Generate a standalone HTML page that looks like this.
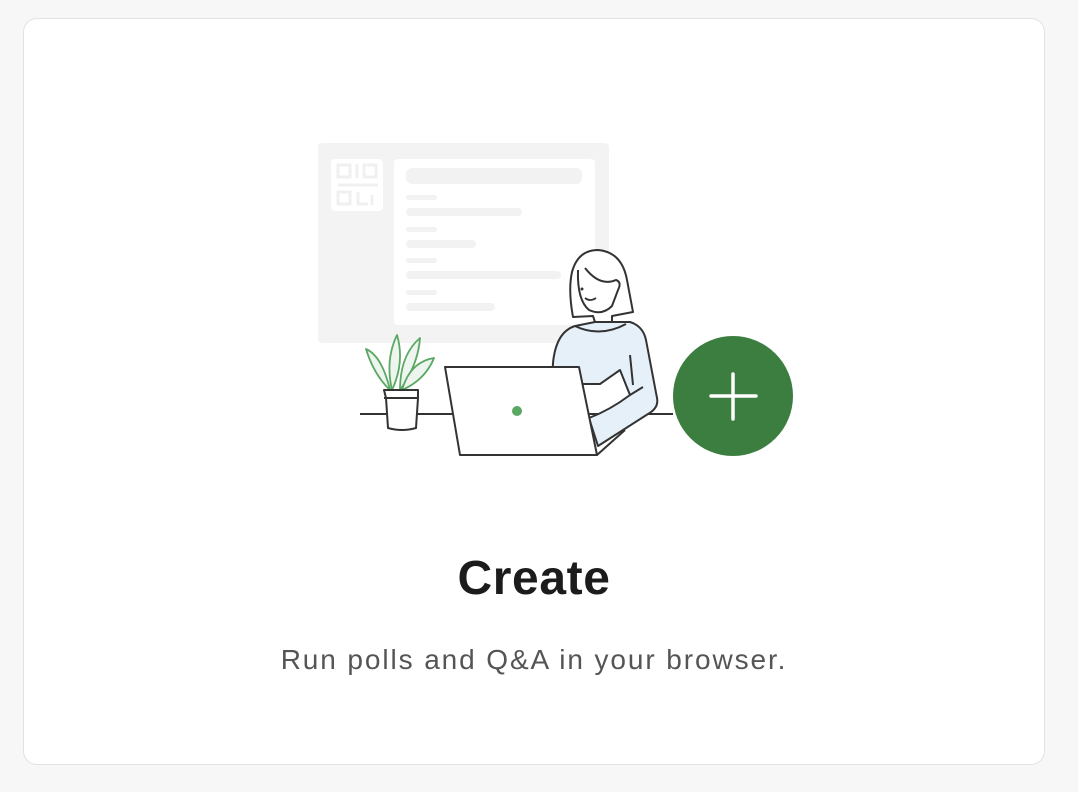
<!DOCTYPE html>
<html><head><meta charset="utf-8"><style>
html,body{margin:0;padding:0;width:1078px;height:792px;background:#f7f7f7;overflow:hidden}
.card{position:absolute;left:23px;top:18px;width:1020px;height:745px;background:#fff;border:1px solid #e2e2e2;border-radius:14px}
h1{position:absolute;left:0;width:1068px;top:551px;margin:0;text-align:center;font:bold 48px "Liberation Sans",sans-serif;color:#1c1c1c;letter-spacing:0.6px}
p{position:absolute;left:0;width:1068px;top:644px;margin:0;text-align:center;font:28px "Liberation Sans",sans-serif;color:#555;letter-spacing:1.9px}
svg{position:absolute;left:0;top:0}
</style></head><body>
<div class="card"></div>
<svg width="1078" height="792" viewBox="0 0 1078 792">
<rect x="318" y="143" width="291" height="200" rx="4" fill="#f3f3f3"/>
<rect x="394" y="159" width="201" height="166" rx="4" fill="#fff"/>
<rect x="331" y="159" width="52" height="52" rx="4" fill="#fff"/>
<g fill="none" stroke="#f0f0f0" stroke-width="3">
<rect x="338" y="165" width="12" height="12"/><rect x="364" y="165" width="12" height="12"/><line x1="357" y1="164" x2="357" y2="178"/>
<rect x="338" y="192" width="12" height="12"/><path d="M338 185h40M358 192v12h10M372 195v10"/>
</g>
<g fill="#f2f2f2">
<rect x="406" y="168" width="176" height="16" rx="6"/>
<rect x="406" y="195" width="31" height="5" rx="2.5"/>
<rect x="406" y="208" width="116" height="8" rx="4"/>
<rect x="406" y="227" width="31" height="5" rx="2.5"/>
<rect x="406" y="240" width="70" height="8" rx="4"/>
<rect x="406" y="258" width="31" height="5" rx="2.5"/>
<rect x="406" y="271" width="155" height="8" rx="4"/>
<rect x="406" y="290" width="31" height="5" rx="2.5"/>
<rect x="406" y="303" width="89" height="8" rx="4"/>
</g>
<line x1="360" y1="414" x2="673" y2="414" stroke="#333" stroke-width="2"/>
<!-- person -->
<path d="M553 363 Q556 332 575 326 L595 322 L612 322 L630 322 Q643 326 646 340 L657 398 Q659 408 648 414 L598 446 L589 418 Q610 410 630 395 L620 370 L600 384 L552 384 Z" fill="#e6f0f9" stroke="#333" stroke-width="2" stroke-linejoin="round"/>
<path d="M575 326 Q600 338 626 324" fill="none" stroke="#333" stroke-width="2"/>
<path d="M630 395 L643 387 M630 355 L633 385" fill="none" stroke="#333" stroke-width="2"/>
<path d="M573 317 Q568 290 572 272 Q578 250 598 250 Q622 252 627 280 L633 312 L612 316 L612 322 L595 322 L593 316 Z" fill="#fff" stroke="#333" stroke-width="2" stroke-linejoin="round"/>
<path d="M578 270 Q577 300 589 310 Q602 316 612 306 L618 290 Q622 282 616 280 Q600 287 585 268" fill="#fff" stroke="#333" stroke-width="2"/>
<circle cx="582" cy="289" r="1.5" fill="#333"/>
<path d="M585 298 Q590 302 596 298" fill="none" stroke="#333" stroke-width="1.8"/>
<!-- plant -->
<g fill="#eef5ee" stroke="#5aa863" stroke-width="1.8" stroke-linejoin="round">
<path d="M366 349 Q382 356 390 390 Q374 375 366 349Z"/>
<path d="M397 335 Q385 360 392 390 Q405 362 397 335Z"/>
<path d="M420 338 Q400 355 400 390 Q418 365 420 338Z"/>
<path d="M434 358 Q410 362 402 390 Q425 380 434 358Z"/>
</g>
<path d="M384 390 L418 390 L418 398 L416 428 Q402 432 388 428 L386 398 Z M384 398 L418 398" fill="#fff" stroke="#333" stroke-width="2" stroke-linejoin="round"/>
<!-- laptop -->
<path d="M445 367 L579 367 L597 455 L460 455 Z" fill="#fff" stroke="#333" stroke-width="2" stroke-linejoin="round"/>
<path d="M597 455 L625 430" stroke="#333" stroke-width="2"/>
<circle cx="517" cy="411" r="5" fill="#5aa863"/>
<!-- plus -->
<circle cx="733" cy="396" r="60" fill="#3c7d40"/>
<path d="M711 396h45M733 374v45" stroke="#fff" stroke-width="3.5" stroke-linecap="round"/>
</svg>
<h1>Create</h1>
<p>Run polls and Q&amp;A in your browser.</p>
</body></html>
